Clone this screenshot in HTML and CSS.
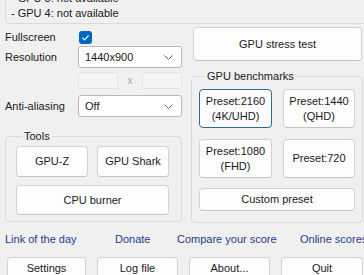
FILE: index.html
```html
<!DOCTYPE html>
<html lang="en">
<head>
    <meta charset="UTF-8">
    <title>FurMark</title>
    <link rel="stylesheet" href="styles.css">
</head>
<body>
<div class="window">
    <div class="gpu-list">
        <div>- GPU 3: not available</div>
        <div>- GPU 4: not available</div>
    </div>

    <div class="main">
        <div class="left">
            <div class="row fullscreen">
                <span class="label">Fullscreen</span>
                <span class="check">
                    <svg width="13" height="13" viewBox="0 0 13 13"><path d="M3.5 6.8 L5.6 8.8 L9.6 4.4" fill="none" stroke="#fff" stroke-width="1.2"/></svg>
                </span>
            </div>
            <div class="row">
                <span class="label">Resolution</span>
                <div class="combo">
                    <span>1440x900</span>
                    <svg width="9" height="5" viewBox="0 0 9 5"><path d="M0.5 0.5 L4.5 4.5 L8.5 0.5" fill="none" stroke="#555" stroke-width="0.9"/></svg>
                </div>
            </div>
            <div class="row custom">
                <span class="field"></span>
                <span class="times">x</span>
                <span class="field"></span>
            </div>
            <div class="row">
                <span class="label">Anti-aliasing</span>
                <div class="combo">
                    <span>Off</span>
                    <svg width="9" height="5" viewBox="0 0 9 5"><path d="M0.5 0.5 L4.5 4.5 L8.5 0.5" fill="none" stroke="#555" stroke-width="0.9"/></svg>
                </div>
            </div>

            <fieldset class="group tools">
                <legend>Tools</legend>
                <div class="tool-grid">
                    <button class="btn">GPU-Z</button>
                    <button class="btn">GPU Shark</button>
                    <button class="btn wide">CPU burner</button>
                </div>
            </fieldset>
        </div>

        <div class="right">
            <button class="btn stress">GPU stress test</button>
            <fieldset class="group bench">
                <legend>GPU benchmarks</legend>
                <div class="bench-grid">
                    <button class="btn preset focused">Preset:2160<br>(4K/UHD)</button>
                    <button class="btn preset">Preset:1440<br>(QHD)</button>
                    <button class="btn preset">Preset:1080<br>(FHD)</button>
                    <button class="btn preset">Preset:720</button>
                    <button class="btn custom-preset">Custom preset</button>
                </div>
            </fieldset>
        </div>
    </div>

    <div class="links">
        <a href="#">Link of the day</a>
        <a href="#">Donate</a>
        <a href="#">Compare your score</a>
        <a href="#">Online scores</a>
    </div>

    <div class="actions">
        <button class="btn">Settings</button>
        <button class="btn">Log file</button>
        <button class="btn">About...</button>
        <button class="btn">Quit</button>
    </div>
</div>
</body>
</html>
```

FILE: styles.css
```css
/* General */
body {
    margin: 0;
    background: #f0f0f0;
    color: #1a1a1a;
    font-family: "Liberation Sans", Arial, sans-serif;
    font-size: 11px;
    line-height: 15px;
    overflow: hidden;
}

.window {
    width: 372px;
}

/* GPU list box (scrolled out of view at the top) */
.gpu-list {
    margin: -14px -10px 0 5px;
    padding: 4px 5px 2px;
    border: 1px solid #dadada;
    border-radius: 4px;
}

/* Two columns */
.main {
    display: flex;
}

.left {
    width: 182px;
    padding-top: 7px;
}

.right {
    width: 172px;
    margin-left: 9px;
    padding-top: 3px;
}

.row {
    display: flex;
    align-items: center;
    padding-left: 5px;
}

.label {
    width: 73px;
}

.fullscreen {
    height: 13px;
    margin-bottom: 2px;
}

.check {
    width: 13px;
    height: 13px;
    margin-left: 1px;
    background: #0067c0;
    border-radius: 3px;
}

.check svg {
    display: block;
}

.combo {
    flex: 1;
    height: 20px;
    display: flex;
    align-items: center;
    justify-content: space-between;
    padding: 0 8px 0 6px;
    background: #fff;
    border: 1px solid #b9b9b9;
    border-radius: 3px;
}

.custom {
    height: 17px;
    margin: 4px 0 6px;
    padding-left: 78px;
}

.field {
    width: 39px;
    height: 15px;
    background: #f4f4f4;
    border: 1px solid #e3e3e3;
    border-radius: 2px;
}

.times {
    width: 24px;
    text-align: center;
    color: #a8a8a8;
    font-size: 10px;
}

/* Group boxes */
.group {
    margin: 0;
    border: 1px solid #dadada;
    border-radius: 4px;
    min-width: 0;
}

.group legend {
    padding: 0 2px;
    margin-left: 6px;
}

.tools {
    margin: 12px 0 0 5px;
    padding: 2px 12px 6px 10px;
}

.tool-grid {
    display: grid;
    grid-template-columns: 72px 72px;
    column-gap: 9px;
    row-gap: 8px;
}

.tool-grid .btn {
    height: 31px;
}

.tool-grid .wide {
    grid-column: span 2;
    height: 30px;
}

.stress {
    width: 169px;
    height: 34px;
    margin-left: 2px;
}

.bench {
    margin-top: 8px;
    padding: 5px 7px 11px 7px;
}

.bench-grid {
    display: grid;
    grid-template-columns: 73px 72px;
    column-gap: 11px;
    row-gap: 11px;
}

.preset {
    height: 39px;
    line-height: 14px;
}

.custom-preset {
    grid-column: span 2;
    height: 23px;
    margin-top: -1px;
}

/* Buttons */
.btn {
    font: inherit;
    color: #1a1a1a;
    background: #fdfdfd;
    border: 1px solid #d3d3d3;
    border-bottom-color: #c4c4c4;
    border-radius: 4px;
    padding: 0;
}

.focused {
    border-color: #2c6b94;
}

/* Links */
.links {
    display: grid;
    grid-template-columns: 110px 62px 123px auto;
    padding-left: 5px;
    margin-top: 9px;
    white-space: nowrap;
}

.links a {
    color: #1f3a93;
    text-decoration: none;
}

/* Bottom buttons */
.actions {
    display: grid;
    grid-template-columns: 79px 81px 81px 82px;
    column-gap: 11px;
    padding-left: 7px;
    margin-top: 10px;
}

.actions .btn {
    height: 22px;
}
```
